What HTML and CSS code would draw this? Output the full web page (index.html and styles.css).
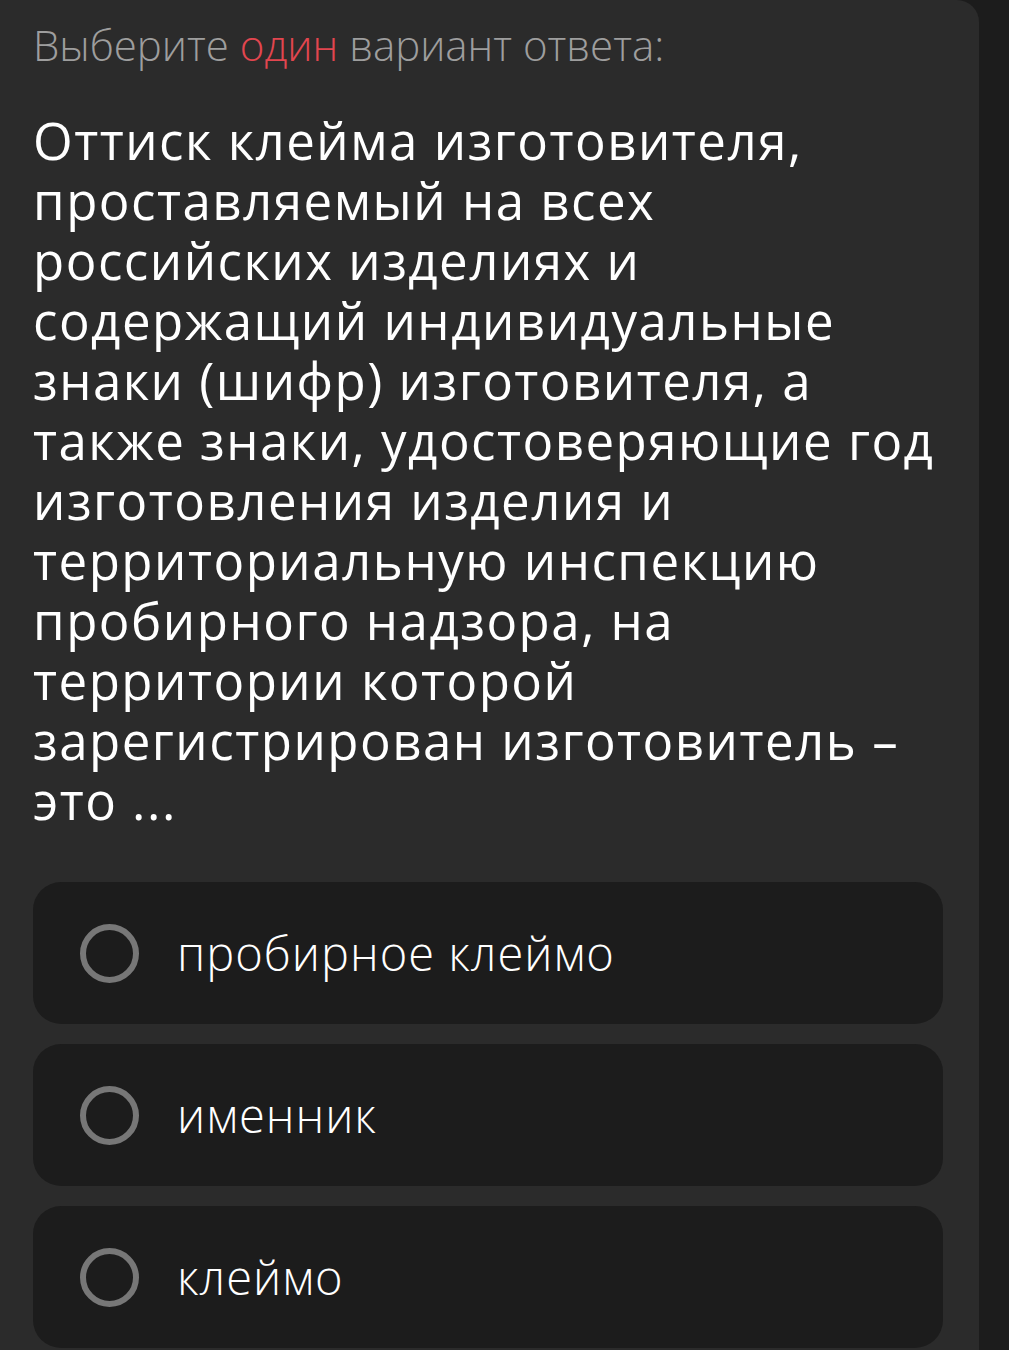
FILE: index.html
```html
<!doctype html>
<html>
<head>
	<meta charset=utf-8>
	<link rel="stylesheet" href="styles.css">
</head>
<body>

<div class=screen>
	<div class=card>

		<div class=hint>Выберите <span class=one>один</span> вариант ответа:</div>

		<div class=question>
			Оттиск клейма изготовителя,<br>
			проставляемый на всех<br>
			российских изделиях и<br>
			содержащий индивидуальные<br>
			знаки (шифр) изготовителя, а<br>
			также знаки, удостоверяющие год<br>
			изготовления изделия и<br>
			территориальную инспекцию<br>
			пробирного надзора, на<br>
			территории которой<br>
			зарегистрирован изготовитель –<br>
			это ...
		</div>

		<div class=answers>
			<div class=answer><span class=radio></span><span class=label>пробирное клеймо</span></div>
			<div class=answer><span class=radio></span><span class=label>именник</span></div>
			<div class=answer><span class=radio></span><span class=label>клеймо</span></div>
		</div>

	</div>
	<div class=side></div>
</div>

</body>
</html>
```

FILE: styles.css
```css
html, body { margin: 0; padding: 0; height: 100%; background: #1c1c1c; }
body { font-family: "Open Sans", "Noto Sans", sans-serif; overflow: hidden; }

.screen { display: flex; height: 1350px; }
.card { width: 979px; background: #2b2b2b; border-top-right-radius: 22px; padding: 20px 36px 0 33px; box-sizing: border-box; }
.side { flex: 1; background: #1c1c1c; }

.hint { font-size: 42px; font-weight: 300; color: #9e9e9e; line-height: 50px; }
.one { color: #e2464f; }

.question { margin-top: 40px; font-size: 51px; letter-spacing: 1.5px; line-height: 60px; color: #fff; white-space: nowrap; }

.answers { display: flex; flex-direction: column; gap: 20px; margin-top: 52px; }
.answer { display: flex; align-items: center; height: 142px; background: #1c1c1c; border-radius: 28px; padding-left: 47px; }
.radio { width: 47px; height: 47px; border: 6px solid #777; border-radius: 50%; flex: none; }
.label { margin-left: 38px; font-size: 47px; font-weight: 300; letter-spacing: 1px; color: #fff; }
```
